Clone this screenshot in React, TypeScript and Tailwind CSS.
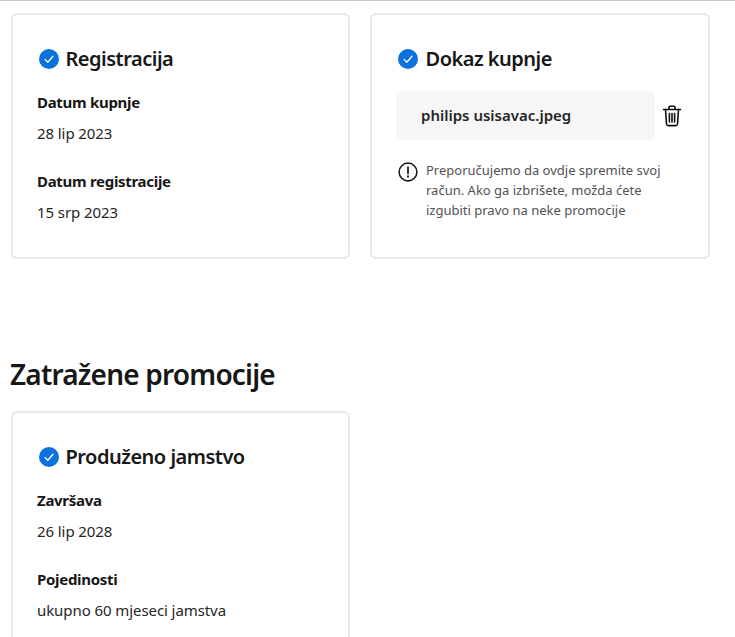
import React from "react";

function CheckBadge({ className }: { className: string }) {
  return (
    <svg viewBox="0 0 20 20" className={className} aria-hidden="true">
      <circle cx="10" cy="10" r="10" fill="#0b72dc" />
      <path
        d="M6 10.4l2.8 2.8 5.2-6"
        fill="none"
        stroke="#fff"
        strokeWidth="1.3"
        strokeLinecap="round"
        strokeLinejoin="round"
      />
    </svg>
  );
}

function TrashIcon() {
  return (
    <svg
      viewBox="0 0 20 22"
      className="w-[20px] h-[22px] shrink-0"
      fill="none"
      stroke="#111"
      strokeWidth="1.6"
      strokeLinecap="round"
      strokeLinejoin="round"
      aria-hidden="true"
    >
      <path d="M1.5 4.5h17" />
      <path d="M7 4.5V2.2c0-.6.4-1 1-1h4c.6 0 1 .4 1 1v2.3" />
      <path d="M3.5 4.5l1 14.5c.1 1 .8 1.6 1.7 1.6h7.6c.9 0 1.6-.6 1.7-1.6l1-14.5" />
      <path d="M7.4 8.5v8.5M10 8.5v8.5M12.6 8.5v8.5" />
    </svg>
  );
}

function InfoIcon() {
  return (
    <svg
      viewBox="0 0 20 20"
      className="w-[20px] h-[20px] shrink-0 mt-[2px]"
      fill="none"
      stroke="#111"
      aria-hidden="true"
    >
      <circle cx="10" cy="10" r="8.9" strokeWidth="1.5" />
      <path d="M10 5v6.5" strokeWidth="1.7" strokeLinecap="round" />
      <path d="M10 14.2v.6" strokeWidth="1.9" strokeLinecap="round" />
    </svg>
  );
}

function Field({ label, value }: { label: string; value: string }) {
  return (
    <div className="mb-[26px] last:mb-0">
      <p className="text-[15px] leading-[22px] font-bold tracking-[-0.3px] text-[#171717]">{label}</p>
      <p className="mt-[9px] text-[15px] leading-[22px] tracking-[-0.08px] text-[#262626]">{value}</p>
    </div>
  );
}

function Card({ title, wide, children }: { title: string; wide?: boolean; children: React.ReactNode }) {
  return (
    <div
      className={`${wide ? "w-[340px]" : "w-[339px]"} h-[246px] shrink-0 rounded-md border-2 border-[#e8e8e8] bg-white pl-[24px] pt-[30px] overflow-hidden`}
    >
      <div className={`flex items-center ${wide ? "gap-[7.5px]" : "gap-[6.5px]"} pl-[2px] h-[28px]`}>
        <CheckBadge className="w-[20px] h-[20px] shrink-0" />
        <h3 className="text-[20px] leading-[28px] font-semibold tracking-[-0.5px] text-[#171717]">{title}</h3>
      </div>
      {children}
    </div>
  );
}

export default function App() {
  return (
    <div className="h-[637px] overflow-hidden bg-white font-['Noto_Sans',sans-serif]">
      <div className="h-px bg-[#c8c8c8]" />
      <div className="flex gap-[20px] pl-[11px] pt-[12px]">
        <Card title="Registracija">
          <div className="mt-[18px]">
            <Field label="Datum kupnje" value="28 lip 2023" />
            <Field label="Datum registracije" value="15 srp 2023" />
          </div>
        </Card>
        <Card title="Dokaz kupnje" wide>
          <div className="mt-[18px] flex items-center gap-[7px]">
            <div className="w-[259px] h-[49px] rounded-md bg-[#f6f6f6] pl-[25px] flex items-center text-[15px] font-semibold text-[#262626]">
              philips usisavac.jpeg
            </div>
            <TrashIcon />
          </div>
          <div className="mt-[20px] flex gap-[8px] pl-[2px]">
            <InfoIcon />
            <p className="w-[250px] text-[13px] leading-[20px] text-[#525252]">
              Preporučujemo da ovdje spremite svoj račun. Ako ga izbrišete, možda ćete izgubiti pravo na neke promocije
            </p>
          </div>
        </Card>
      </div>
      <h2 className="mt-[95px] pl-[10px] text-[28px] leading-[40px] font-semibold tracking-[-0.8px] text-[#171717]">
        Zatražene promocije
      </h2>
      <div className="pl-[11px] mt-[17px]">
        <Card title="Produženo jamstvo">
          <div className="mt-[18px]">
            <Field label="Završava" value="26 lip 2028" />
            <Field label="Pojedinosti" value="ukupno 60 mjeseci jamstva" />
          </div>
        </Card>
      </div>
    </div>
  );
}
